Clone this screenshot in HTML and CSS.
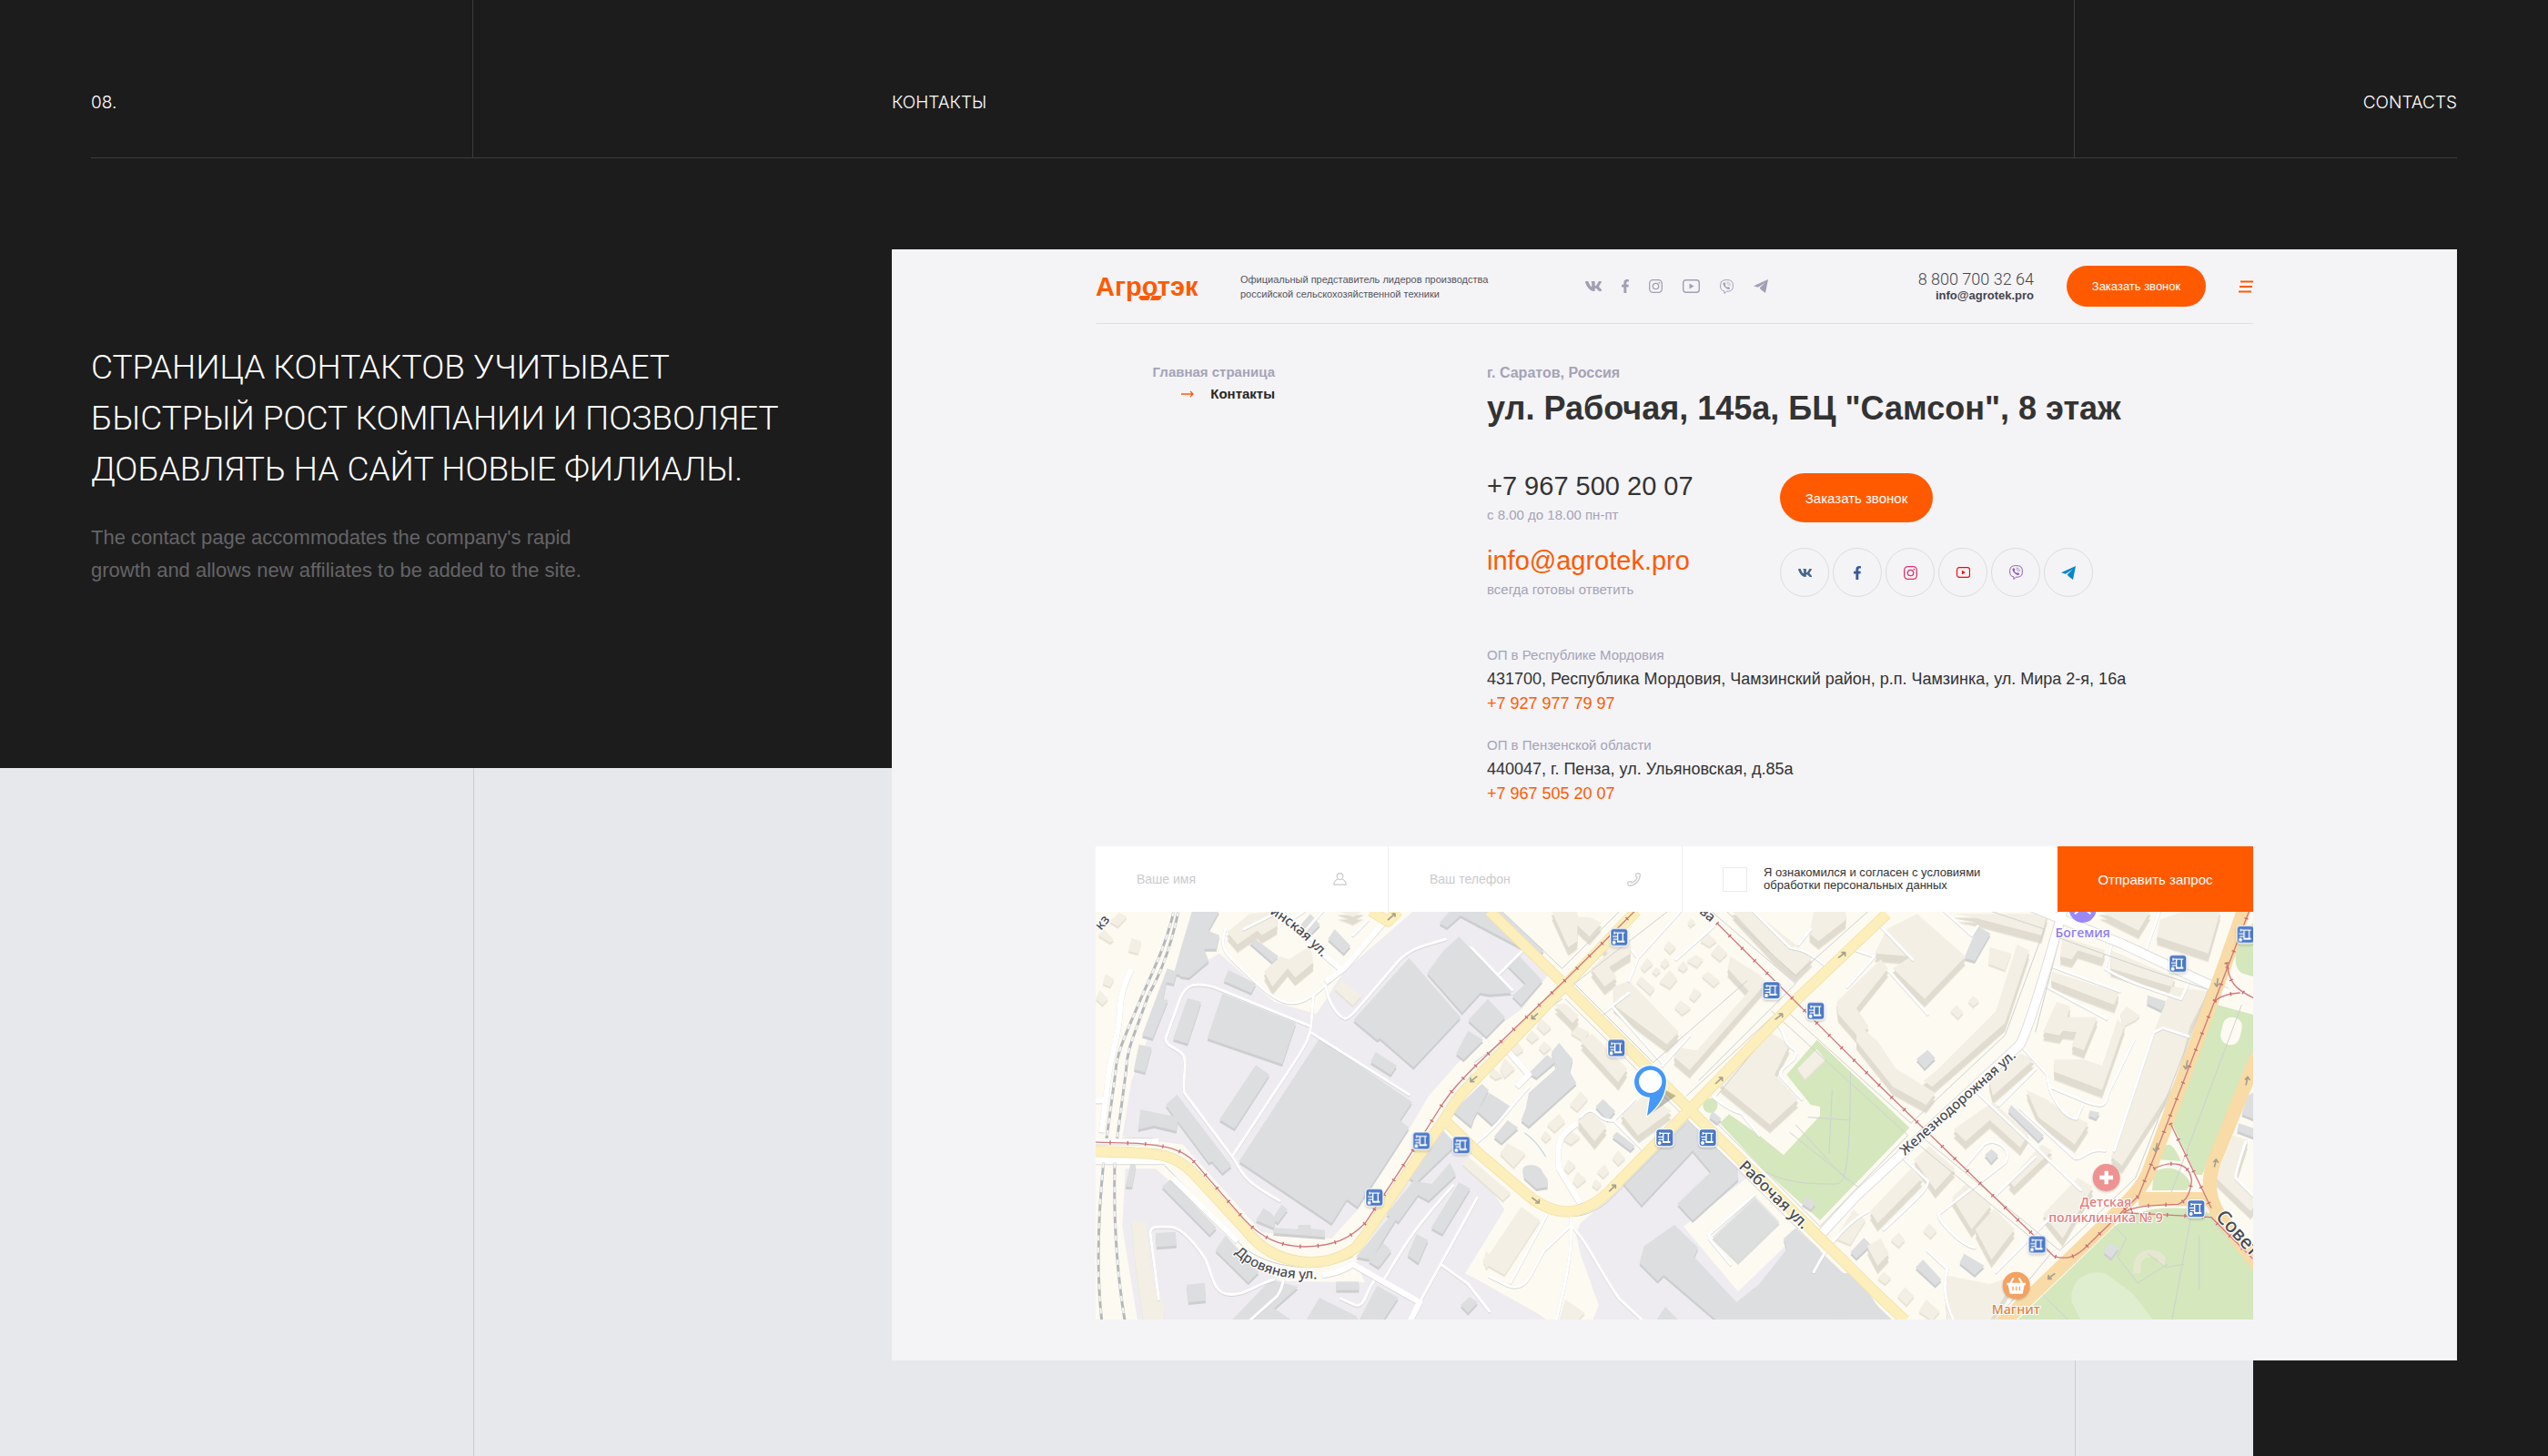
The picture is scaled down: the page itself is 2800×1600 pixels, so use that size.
FILE: index.html
```html
<!DOCTYPE html>
<html lang="ru">
<head>
<meta charset="utf-8">
<title>Агротэк — Контакты</title>
<meta name="viewport" content="width=device-width, initial-scale=1">
<link rel="stylesheet" href="styles.css">
</head>
<body>
<svg class="sprite" aria-hidden="true">
  <symbol id="i-vk" viewBox="18 96 530 320"><path fill="currentColor" d="M545 117.700c3.700-12.500 0-21.700-17.800-21.700h-58.900c-15 0-21.900 7.900-25.600 16.700 0 0-30 73.100-72.400 120.500-13.700 13.700-20 18.100-27.500 18.100-3.700 0-9.400-4.400-9.400-16.900V117.700c0-15-4.200-21.700-16.600-21.700h-92.600c-9.400 0-15 7-15 13.500 0 14.200 21.200 17.500 23.400 57.500v86.800c0 19-3.400 22.500-10.900 22.500-20 0-68.600-73.400-97.400-157.400-5.800-16.300-11.500-22.900-26.600-22.900H38.800c-16.800 0-20.200 7.900-20.200 16.700 0 15.600 20 93.100 93.100 195.500C160.400 378.100 229 416 291.400 416c37.500 0 42.100-8.400 42.100-22.900 0-66.800-3.400-73.100 15.400-73.100 8.700 0 23.700 4.400 58.700 38.100 40 40 46.600 57.900 69 57.900h58.900c16.800 0 25.300-8.400 20.400-25-11.200-34.900-86.900-106.700-90.300-111.500-8.700-11.200-6.200-16.200 0-26.200.1-.1 72-101.300 79.400-135.600z"/></symbol>
  <symbol id="i-fb" viewBox="22 0 276 512"><path fill="currentColor" d="M279.140 288l14.220-92.660h-88.910v-60.130c0-25.350 12.420-50.060 52.240-50.060h40.420V6.260S260.430 0 225.360 0c-73.220 0-121.080 44.380-121.080 124.720v70.620H22.890V288h81.390v224h100.170V288z"/></symbol>
  <symbol id="i-ig" viewBox="0 0 15 15"><g fill="none" stroke="currentColor" stroke-width="1.300"><rect x=".7" y=".7" width="13.600" height="13.600" rx="3.800"/><circle cx="7.500" cy="7.500" r="3.200"/></g><circle cx="11.400" cy="3.600" r=".9" fill="currentColor"/></symbol>
  <symbol id="i-yt" viewBox="0 0 19 15"><rect x=".7" y=".7" width="17.600" height="13.600" rx="3" fill="none" stroke="currentColor" stroke-width="1.400"/><path fill="currentColor" d="M7.500 4.500v6l5-3z"/></symbol>
  <symbol id="i-vb" viewBox="0 0 15 16"><path fill="none" stroke="currentColor" stroke-width="1" d="M7.500.6c5 0 6.900 1.700 6.900 6.400s-2 6.200-6.900 6.200l-2.600 2.300v-2.600C1.600 12.200.6 10.600.6 7 .6 2.300 2.500.6 7.500.6z"/><path fill="currentColor" d="M4.500 3.200c.8-.3 1.300.7 1.700 1.500.3.700-.6 1-.5 1.600.3 1.200 1.200 2.100 2.300 2.500.6.200.9-.8 1.500-.5.700.4 1.700.9 1.500 1.600-.5 1.200-1.500 1.300-2.500.8-2.300-1.100-4.100-2.900-4.900-5.200-.3-1 0-1.900.9-2.300z"/><path fill="none" stroke="currentColor" stroke-width=".7" d="M7.500 3c2.500.1 3.800 1.500 3.900 4M7.700 4.800c1.300.1 1.900.8 2 2"/></symbol>
  <symbol id="i-tg" viewBox="0 0 16 15"><path fill="currentColor" d="M0 7.300L16 0l-3 15-5-3.800-1.300-2L13 3.400 4.800 8.800z"/></symbol>
  <symbol id="stop" viewBox="-36 -36 72 72"><rect x="-31" y="-31" width="62" height="62" rx="14" fill="#fff" opacity=".95"/><rect x="-27" y="-27" width="54" height="54" rx="9" fill="#4b79c6"/><g fill="none" stroke="#fff" stroke-width="4"><path d="M-16-19v9M-16-15H18M-5-15V12M12-15V12M-22-3H-5M-20 6H-5"/><path d="M-7 14H18" stroke-width="6"/></g><circle cx="-17" cy="17" r="6" fill="#fff"/></symbol>
</svg>

<div class="slide">
  <div class="backdrop"></div>

  <header class="top">
    <span>08.</span>
    <span>КОНТАКТЫ</span>
    <span>CONTACTS</span>
  </header>

  <div class="stage">
    <section class="intro">
      <h1>СТРАНИЦА КОНТАКТОВ УЧИТЫВАЕТ<br>БЫСТРЫЙ РОСТ КОМПАНИИ И ПОЗВОЛЯЕТ<br>ДОБАВЛЯТЬ НА САЙТ НОВЫЕ ФИЛИАЛЫ.</h1>
      <p>The contact page accommodates the company's rapid<br>growth and allows new affiliates to be added to the site.</p>
    </section>

    <main class="site">
      <div class="bar">
        <a class="logo" href="#">Агротэк<svg viewBox="0 0 26 5" aria-hidden="true"><path fill="currentColor" d="M2 0h10l1 1-2 4H3L0 2zM15 0h11l-2 4-2 1h-9z"/></svg></a>
        <p class="tagline">Официальный представитель лидеров производства<br>российской сельскохозяйственной техники</p>
        <nav class="social" aria-label="Социальные сети">
          <a href="#" aria-label="ВКонтакте"><svg width="18" height="11"><use href="#i-vk"/></svg></a>
          <a href="#" aria-label="Facebook"><svg width="8" height="15"><use href="#i-fb"/></svg></a>
          <a href="#" aria-label="Instagram"><svg width="15" height="15"><use href="#i-ig"/></svg></a>
          <a href="#" aria-label="YouTube"><svg width="19" height="15"><use href="#i-yt"/></svg></a>
          <a href="#" aria-label="Viber"><svg width="15" height="16"><use href="#i-vb"/></svg></a>
          <a href="#" aria-label="Telegram"><svg width="16" height="15"><use href="#i-tg"/></svg></a>
        </nav>
        <div class="reach">
          <a class="reach-phone" href="tel:88007003264">8 800 700 32 64</a>
          <a class="reach-mail" href="mailto:info@agrotek.pro">info@agrotek.pro</a>
        </div>
        <button class="pill pill-small" type="button">Заказать звонок</button>
        <button class="burger" type="button" aria-label="Меню"><svg width="16" height="14" viewBox="0 0 16 14"><g stroke="currentColor" stroke-width="2"><path d="M2 1.500h14M1 7h14M0 12.500h14"/></g></svg></button>
      </div>

      <div class="content">
        <nav class="crumbs" aria-label="Навигация">
          <a href="#">Главная страница</a>
          <span class="current"><svg width="14" height="8" viewBox="0 0 14 8"><path fill="none" stroke="currentColor" stroke-width="1.300" d="M0 4h13M10 1l3 3-3 3"/></svg>Контакты</span>
        </nav>
        <div class="info">
          <p class="city">г. Саратов, Россия</p>
          <h2>ул. Рабочая, 145а, БЦ "Самсон", 8 этаж</h2>
          <div class="contacts">
            <div><a class="big" href="tel:+79675002007">+7 967 500 20 07</a><p class="note">с 8.00 до 18.00 пн-пт</p></div>
            <button class="pill" type="button">Заказать звонок</button>
            <div><a class="big accent" href="mailto:info@agrotek.pro">info@agrotek.pro</a><p class="note">всегда готовы ответить</p></div>
            <nav class="rounds" aria-label="Мы в соцсетях">
              <a class="vk" href="#" aria-label="ВКонтакте"><svg width="15" height="9"><use href="#i-vk"/></svg></a>
              <a class="fb" href="#" aria-label="Facebook"><svg width="8" height="15"><use href="#i-fb"/></svg></a>
              <a class="ig" href="#" aria-label="Instagram"><svg width="15" height="15"><use href="#i-ig"/></svg></a>
              <a class="yt" href="#" aria-label="YouTube"><svg width="15" height="12"><use href="#i-yt"/></svg></a>
              <a class="vb" href="#" aria-label="Viber"><svg width="15" height="16"><use href="#i-vb"/></svg></a>
              <a class="tg" href="#" aria-label="Telegram"><svg width="16" height="15"><use href="#i-tg"/></svg></a>
            </nav>
          </div>
          <div class="branches">
            <div class="branch"><p class="note">ОП в Республике Мордовия</p><p class="address">431700, Республика Мордовия, Чамзинский район, р.п. Чамзинка, ул. Мира 2-я, 16а</p><a class="tel" href="tel:+79279777997">+7 927 977 79 97</a></div>
            <div class="branch"><p class="note">ОП в Пензенской области</p><p class="address">440047, г. Пенза, ул. Ульяновская, д.85а</p><a class="tel" href="tel:+79675052007">+7 967 505 20 07</a></div>
          </div>
        </div>
      </div>

      <form class="request">
        <label class="field"><input type="text" placeholder="Ваше имя" aria-label="Ваше имя"><svg width="15" height="14" viewBox="0 0 15 14"><path fill="none" stroke="currentColor" stroke-width="1.200" d="M7.500.6c2 0 3.300 1.300 3.300 3.200S9.500 7.600 7.500 7.600 4.200 5.700 4.200 3.800 5.500.6 7.500.6zM5 7.300C2 8.300.8 10 .8 13.200h13.400C14.200 10 13 8.300 10 7.300"/></svg></label>
        <label class="field"><input type="tel" placeholder="Ваш телефон" aria-label="Ваш телефон"><svg width="15" height="15" viewBox="0 0 15 15"><path fill="none" stroke="currentColor" stroke-width="1.200" d="M11 .7c2 0 3.300.6 3.300 1.800C14 9 9 14 2.500 14.300 1.300 14.300.7 13 .7 11c0-.7.400-.9 1-1l2.500-.3c.6 0 .8.500.9 1.500 3-.9 5-2.900 6.100-6.100-1-.2-1.500-.4-1.500-.9L10 1.700c.1-.7.400-1 1-1z"/></svg></label>
        <label class="agree"><input type="checkbox"><span>Я ознакомился и согласен с условиями<br>обработки персональных данных</span></label>
        <button class="send" type="submit">Отправить запрос</button>
      </form>

      <svg class="map" viewBox="12 3 3816 1344" role="img" aria-label="Карта">
        <rect class="land" x="0" y="0" width="3840" height="1350"/>

        <!-- industrial zones -->
        <g class="zone">
          <path d="M300 210L420 140L600 300L740 340L830 200L1060 0H1260L1520 190L1420 320L1260 440L1110 610L1010 780L880 980L790 1080L560 1060L300 770L100 745L130 560L180 430L250 200Z"/>
          <path d="M110 850H210L290 920L480 1110L620 1220L900 1225L870 1160L1110 760L1220 780L1360 985L1250 1180L1500 1350H150L100 1040Z"/>
          <path d="M1250 1180L1420 1290L1500 1350H1650L1670 1300L1590 1080L1610 1030L1760 900L1960 690L2160 880L1950 1040L2130 1255L2290 1100L2330 1060L2620 1350H1200Z"/>
        </g>
        <path class="land" d="M1260 1210L1510 1350H1650L1670 1300L1610 1130L1590 1040L1450 1010L1360 985L1230 1195Z"/>

        <!-- parks -->
        <g class="park">
          <path d="M2390 425L2695 715L2400 1020L2210 850L2070 700L2100 670L2200 740L2280 805L2400 675V645L2370 640L2290 540Z"/>
          <path d="M3710 310L3840 345V440L3660 870H3640L3560 700Z"/>
          <path d="M3780 110L3840 20V220L3790 205C3765 190 3765 140 3780 110Z"/>
          <path d="M3500 860C3550 835 3600 850 3622 900L3610 920L3495 922Z"/>
          <path d="M3535 780C3550 760 3565 770 3590 825L3520 820Z"/>
          <path d="M3050 1350L3360 1050C3430 985 3520 970 3640 985L3700 1000L3840 1170V1350Z"/>
          <circle cx="2038" cy="642" r="24"/>
        </g>
        <path class="meadow" d="M3230 1290C3220 1220 3280 1180 3340 1195L3430 1260L3500 1350H3260Z"/>
        <rect class="land" x="3724" y="350" width="64" height="92" rx="30" transform="rotate(14 3756 396)"/>
        <path class="ring" d="M3445 1195C3440 1140 3470 1125 3500 1130S3530 1150 3524 1165"/>

        <!-- grey buildings -->
        <g class="grey">
          <path d="M330 0H420L300 215L270 205L300 100Z"/>
          <path d="M370 60L420 80L410 125H370L385 165L320 220L290 215Z"/>
          <path d="M248 190L280 200L270 240L245 235L235 290L250 295L200 420L165 410Z"/>
          <path d="M155 440L197 450L175 532L138 522Z"/><path d="M315 287L360 300L315 437L267 422Z"/>
          <path d="M430 272L672 370L627 505L380 420Z"/><path d="M450 195L540 240L525 270L434 230Z"/>
          <path d="M540 508L585 540L470 718L420 688Z"/><path d="M280 605L460 840L430 865L395 825L385 830L243 640Z"/>
          <path d="M160 655L285 680L278 725L205 708L152 720Z"/><path d="M750 420L1055 630L1015 690L1045 715L875 975L840 950L790 1030L485 825Z"/>
          <path d="M1045 155L1215 350L1060 515L950 420L940 425L862 360Z"/><path d="M1210 85L1385 270L1310 275L1280 270L1220 335L1105 205L1160 130Z"/>
          <path d="M1180 0H1350L1490 130L1470 150L1215 15L1170 55L1145 40Z"/><path d="M1410 150L1485 230L1415 310L1385 280L1430 240L1370 180Z"/>
          <path d="M1305 290L1362 350L1300 415L1240 360Z"/><path d="M1240 395L1290 425L1225 490L1200 470Z"/>
          <path d="M935 465L1005 510L985 540L918 498Z"/><path d="M720 10L752 45L722 75L688 45Z"/><path d="M800 60L852 115L830 140L778 92Z"/>
          <path d="M535 90L615 150L595 170L520 105Z"/>
          <path d="M260 885L410 1045L388 1068L230 908Z"/><path d="M440 1070L550 1190L515 1225L407 1118Z"/><path d="M210 1062L275 1058L279 1103L213 1108Z"/><path d="M312 1232L372 1226L375 1285L318 1290Z"/>
          <path d="M128 830L145 840L132 910L110 908Z"/><path d="M565 980L590 995L605 1015L600 1045L540 1020Z"/><path d="M600 1045L680 1050V1035H720L722 1048L768 1052V1075L598 1062Z"/>
          <path d="M625 968L645 985L612 1028L595 1015Z"/><path d="M1155 720L1200 770L1070 895L1045 880Z"/><path d="M1180 830L1200 870L1110 955L1075 935L1010 1025L970 1000L1060 890L1120 900Z"/>
          <path d="M1210 895L1247 915L1155 1065L1118 1045Z"/><path d="M985 1005L1000 1020L920 1150L870 1140Z"/><path d="M1070 1065L1108 1085L1075 1160L1040 1135Z"/>
          <path d="M960 1095L987 1120L945 1175L912 1155Z"/><path d="M805 1222H880V1250H805Z"/><path d="M750 1275L870 1335L880 1350H705Z"/><path d="M940 1235L1010 1275L960 1350H880Z"/>
          <path d="M590 1215L680 1240L600 1310L660 1350H460Z"/><path d="M1245 1272L1272 1290L1240 1325L1215 1300Z"/>
          <path d="M1285 570L1308 590L1260 680L1250 710L1190 660Z"/><path d="M1310 600L1380 645L1320 705L1270 660Z"/>
          <path d="M1540 435L1585 490L1575 530L1597 568L1440 710L1415 690L1430 650L1440 600L1530 520L1515 465Z"/><path d="M1500 475L1530 495L1465 550L1440 535Z"/>
          <path d="M1370 690L1405 715L1350 765L1325 745Z"/><path d="M1685 620L1725 660L1700 690L1660 645Z"/><path d="M1730 728L1790 775L1775 790L1715 745Z"/>
          <path d="M1420 850C1430 830 1480 835 1485 860L1502 885V910L1465 915L1425 880Z"/><path d="M1955 680L2130 850V885L1980 1020L1930 965L2040 860L1980 790L1812 970L1745 890Z"/>
          <path d="M1920 1035L1998 1110L1985 1140L2125 1290L2200 1230L2290 1115L2280 1080L2320 1045L2640 1350H2060L1885 1200L1865 1220L1805 1160L1820 1105Z"/>
          <path d="M1890 1305L1935 1350H1860Z"/><path d="M2185 940L2267 1025L2130 1158L2045 1075Z" opacity=".7"/>
          <path d="M2545 1078L2568 1100L2520 1145L2500 1125Z"/><path d="M2380 440L2400 450" /><path d="M2045 660L2075 685L2060 700L2035 680Z"/><path d="M2358 940L2385 965L2370 985L2340 965Z"/>
          <path d="M2920 50L2962 75L2910 165L2875 155Z"/><path d="M2755 458L2780 485L2745 520L2718 488Z"/><path d="M3480 278L3540 298L3525 328L3478 305Z"/>
          <path d="M3030 640L3138 740L3120 758L3020 660Z"/><path d="M2965 785L2988 805L2965 830L2943 805Z"/><path d="M3290 658L3322 665L3310 685L3285 675Z"/>
          <path d="M2875 1130L2942 1170L2910 1200L2860 1160Z"/><path d="M2740 1150L2800 1215L2780 1235L2715 1175Z"/><path d="M2380 1190L2520 1195L2620 1350H2500L2380 1260Z"/>
          <path d="M3810 610L3840 590V690L3790 670Z"/><path d="M3780 700L3840 720V750L3775 725Z"/><path d="M3355 1095L3385 1110L3360 1145L3335 1125Z"/>
        </g>

        <!-- low beige houses -->
        <g class="beige low">
          <path d="M90 5L115 20L85 52L58 35Z"/><path d="M40 60L72 95L60 105L20 80Z"/><path d="M130 90L162 100L152 140L120 132Z"/><path d="M45 208L73 225L60 250L35 240Z"/><path d="M25 260L53 290L35 310L12 290Z"/>
          <path d="M130 1022L178 1025L195 1180L240 1310L235 1350H170L145 1180Z"/><path d="M825 228L888 280L860 312L800 258Z"/><path d="M1240 810L1380 930L1355 955L1220 835Z"/><path d="M1300 1120L1320 1150L1300 1180L1290 1150Z"/>
          <path d="M1480 355L1515 385L1490 405L1465 380Z"/><path d="M1450 395L1475 415L1450 435L1430 415Z"/><path d="M1490 430L1515 450L1490 470L1472 452Z"/><path d="M1400 430L1423 460L1400 475L1380 455Z"/><path d="M1360 485L1395 520L1360 550L1345 520Z"/><path d="M1320 515L1355 545L1330 555L1310 540Z"/>
          <path d="M1610 595L1635 620L1600 660L1575 640Z"/><path d="M1540 670L1560 695L1525 728L1500 705Z"/><path d="M1495 725L1515 745L1495 762L1480 745Z"/><path d="M1370 765L1430 800L1390 845L1345 800Z"/><path d="M1570 720L1610 745L1580 770L1555 755Z"/><path d="M1570 820L1595 840L1570 865L1555 850Z"/><path d="M1600 860L1630 885L1600 910L1585 890Z"/><path d="M1690 835L1705 860L1685 880L1665 860Z"/><path d="M1660 885L1680 900L1665 918L1648 905Z"/><path d="M1735 790L1758 815L1735 838L1715 815Z"/><path d="M1580 370L1640 400L1620 430L1580 405Z"/>
          <path d="M1415 975L1477 1020L1360 1200L1290 1160Z"/><path d="M1560 1280L1625 1325L1600 1350H1540Z"/><path d="M2510 985L2550 1020L2500 1100L2450 1080Z"/>
          <path d="M1830 155L1850 175L1820 200L1808 185Z"/><path d="M1860 185L1875 198L1860 212L1845 200Z"/><path d="M1890 155L1905 172L1888 188L1872 175Z"/><path d="M1905 195L1930 225L1905 255L1870 235Z"/><path d="M1950 165L1965 185L1950 200L1930 188Z"/><path d="M1990 145L2015 160L1995 185L1960 165Z"/><path d="M2030 75L2060 100L2035 118L2005 100Z"/><path d="M1900 100L1925 120L1905 140L1885 120Z"/><path d="M1810 215L1855 255L1840 275L1795 235Z"/><path d="M2030 200L2070 230L2050 250L2010 215Z"/><path d="M1985 255L2010 270L1985 298L1968 285Z"/><path d="M1940 295L1975 320L1945 342L1920 318Z"/><path d="M2065 110L2095 140L2070 165L2040 140Z"/><path d="M1975 25L1990 38L1973 52L1963 40Z"/>
          <path d="M2390 455L2418 490L2350 555L2325 520Z"/><path d="M2905 280L2925 298L2905 315L2888 298Z"/><path d="M2850 310L2872 335L2855 355L2830 330Z"/>
          <path d="M2760 1030L2785 1055L2765 1078L2740 1055Z"/><path d="M2660 1060L2680 1085L2660 1108L2633 1085Z"/><path d="M2610 1190L2635 1210L2615 1230L2590 1212Z"/><path d="M2680 1240L2710 1270L2685 1300L2655 1270Z"/><path d="M2750 1282L2795 1320L2770 1350L2725 1320Z"/>
          <path d="M3410 315L3455 345L3440 360L3400 380L3390 340Z"/><path d="M2960 120L3030 140L3010 195L2955 175Z"/>
        </g>

        <!-- tall beige blocks -->
        <g class="beige tall">
          <path d="M445 70L520 10L610 0V50L560 80L545 65L480 110Z"/><path d="M567 200L620 150L650 160L720 115L730 170L670 220L645 190L595 250Z"/>
          <path d="M810 0H895L860 20Z"/><path d="M1515 0H1600V100L1570 120Z"/><path d="M1570 20H1640L1680 40L1640 85Z"/><path d="M1645 190L1700 140L1670 100L1775 100V140L1705 185L1730 220L1690 250Z"/>
          <path d="M1720 250L1770 230L1935 400L1895 440L1720 310Z"/><path d="M2105 150L2200 210L2225 235L1970 525L1918 480L1930 450L1995 460L2165 265L2095 190Z"/>
          <path d="M2110 0H2180L2375 155L2320 210L2250 150Z"/><path d="M2380 0H2485V30L2395 100L2365 75Z"/><path d="M1525 310L1560 305L1605 345L1585 370Z"/><path d="M1611 430L1650 405L1765 520L1735 565Z"/>
          <path d="M2455 300L2600 160L2625 190L2520 320L2560 380L2530 420L2460 340Z"/><path d="M1600 690L1640 660L1697 710L1657 760Z"/><path d="M1744 670L1830 600L1910 660L1800 740Z"/>
          <path d="M2070 570L2220 390L2300 440L2250 540L2328 620L2235 705Z"/><path d="M2620 60L2720 10L2880 150L2745 290L2640 190L2700 150L2580 140Z"/>
          <path d="M2840 10H3150L3130 80L2900 20Z"/><path d="M3050 110L3090 130L3010 370L2770 580L2740 560L2780 530L2980 330Z"/><path d="M2520 370L2590 430L2650 520L2780 600L2750 640L2640 580L2520 430Z"/>
          <path d="M3200 85L3340 130L3330 155L3250 130L3230 160L3192 150Z"/><path d="M3360 130L3570 220L3560 250L3358 190Z"/><path d="M3165 200L3385 270L3370 310L3162 230Z"/><path d="M3180 300L3225 315L3215 350L3315 350L3270 460L3230 445L3245 400L3200 395L3190 410L3135 400Z"/>
          <path d="M3380 360L3405 375L3330 590L3172 530V490L3270 490L3330 510Z"/><path d="M3560 250L3680 265L3620 380L3575 560L3395 840L3360 810L3500 400Z"/><path d="M3520 30L3600 0H3720L3680 140L3510 85Z"/><path d="M3320 0H3490L3450 65Z"/>
          <path d="M2957 560L3060 470L3106 490L2970 610Z"/><path d="M3080 590L3145 620L3200 660L3285 700L3240 770L3120 680Z"/><path d="M2840 720L2970 630L3088 735L3060 780L2960 690L2880 760Z"/>
          <path d="M2565 990L2700 850L2738 880L2590 1030Z"/><path d="M2710 820L2760 775L2845 850L2780 920Z"/><path d="M3022 890L3130 770L3165 790L3040 910Z"/><path d="M2835 945L2880 900L2965 970L2900 1050Z"/><path d="M2912 1050L2975 980L3042 1050L2965 1150Z"/><path d="M3135 1000L3250 880L3300 910L3200 1080Z"/>
          <path d="M2555 1105L2600 1080L2627 1130L2590 1170Z"/><path d="M2810 1200L2960 1230L3050 1200L2960 1350H2820Z"/><path d="M3705 880L3760 740L3810 755L3770 880L3840 960L3820 990Z"/>
        </g>

        <!-- lanes, pavements -->
        <g class="lane">
          <path d="M440 60C420 130 430 130 540 235C640 330 680 310 740 270L830 190"/><path d="M770 235C770 290 810 350 835 355C850 355 860 340 1010 165C1060 115 1100 115 1165 93"/>
          <path d="M730 280L722 380C715 430 700 450 600 600L465 805"/><path d="M720 380L400 250C340 235 310 240 290 290L243 420C240 450 290 450 303 480C315 520 295 560 305 600L470 820C500 880 520 900 618 955"/>
          <path d="M720 400L1045 605"/><path d="M220 1280L192 1060C195 1040 210 1040 260 1042C300 1045 350 1110 375 1150C400 1210 400 1250 440 1262C500 1275 540 1230 600 1215"/><path d="M520 1350L610 1270C640 1230 625 1200 640 1180"/>
          <path d="M820 1278L870 1300C900 1305 900 1260 930 1220"/><path d="M960 1220C1030 1100 1060 1050 1190 905"/><path d="M1080 1290L1270 945"/><path d="M1150 1165L1240 1230L1310 1320"/><path d="M1250 120L1385 260"/><path d="M1340 210L1420 130"/>
          <path d="M1260 770C1350 700 1380 640 1440 580"/><path d="M1310 1205L1370 1235C1440 1260 1450 1180 1490 1120L1575 1040"/><path d="M1380 1225L1500 1000"/><path d="M1578 1010C1585 1100 1570 1200 1530 1350"/><path d="M1580 1040C1630 1080 1680 1200 1740 1280L1815 1350"/>
          <path d="M1610 680C1660 620 1660 700 1720 690L1815 785M1720 690L1790 620"/><path d="M2185 935L2035 1065V1080L2105 1165"/><path d="M2045 610C2080 640 2110 660 2140 665L2200 740"/><path d="M2260 375C2290 400 2270 430 2320 460C2330 500 2260 510 2270 545L2340 620"/>
          <path d="M1770 230L1800 155L1940 0M1800 155L1780 130"/><path d="M1925 160L2050 50"/><path d="M1720 320L1880 500M1680 340L1770 270M1880 510L1970 410"/><path d="M2180 0L2300 120C2320 130 2330 110 2420 180M2370 60L2330 110"/>
          <path d="M2600 50L2705 160M2520 130L2580 150L2490 250M2630 200L2755 340"/><path d="M2810 0L2900 80L2920 50"/><path d="M3160 180L3390 265M3130 240L3345 355"/><path d="M3360 115L3340 190C3400 230 3500 260 3590 290L3620 225M3470 140L3520 0"/>
          <path d="M3060 440L3150 540C3150 600 3200 680 3245 685L3265 640M3160 580L3280 630C3340 650 3340 640 3350 600L3435 425"/><path d="M3370 790L3500 400L3530 385L3620 415"/><path d="M2920 600L3260 920M2990 640L3110 520M3060 650L3240 815C3270 820 3280 780 3340 790M2880 840L2940 770C2980 740 3040 790 3010 830L2790 1000C2790 1020 2860 1100 2910 1110"/>
          <path d="M2670 810L2755 890C2760 910 2740 930 2610 1050M2975 940L3110 810M2980 1190L3160 1010"/><path d="M2755 1120L2820 1180C2800 1250 2820 1300 2840 1350"/><path d="M3804 760C3780 830 3770 860 3770 880L3840 950"/><path d="M2380 1190C2430 1090 2500 1020 2560 990"/>
          <path d="M620 0L500 60M640 40L700 0M700 70L760 0M860 80L910 30M640 0L790 170"/>
        </g>
        <g class="thin">
          <path d="M1350 0L1550 190L1740 0M1590 240L1850 500L2160 230M1560 290L2400 1120M1590 240L1900 0M2000 560L2320 240L2040 0M1960 610L2350 250M1260 500L1550 290M1960 700L1700 960C1620 1020 1560 1020 1480 970L1260 770"/>
          <path d="M2090 0L2320 215L2560 0M2290 330L2700 700L3010 410L3140 60L2960 0M2240 330L2690 740L2400 1040L2050 690M2290 330L2060 610M3110 400L3190 90L3470 190L3680 260M2730 740L3190 1120L3440 880L3680 260M2700 750L3160 1130L2980 1350"/>
          <path d="M2220 860C2300 900 2370 900 2450 900C2480 900 2500 870 2500 530M2300 730L2550 930M2430 800L2440 590M2360 680L2500 690M2320 705L2490 890"/>
          <path d="M3790 310L3550 950M3410 1080L3380 1140L3450 1230M3480 1130L3540 1175L3600 1165M3625 1000L3560 1350M3650 1070V1250M3840 1180L3700 1030M3360 1030L3410 1080M3450 1225L3545 1165M3120 1250L3220 1350"/>
          <path d="M1250 540L1010 900M200 750H100M240 840L500 1110C620 1200 780 1180 860 1140"/>
        </g>
        <path class="water" d="M1426 732C1470 760 1480 790 1496 810"/>
        <g class="street">
          <path d="M130 190C110 240 95 260 92 330C90 420 55 480 48 600L32 730M12 625H48"/><path d="M960 40L830 190L770 235M760 140L825 195M12 760H220M12 825H240" />
          <path d="M265 880L480 1090M760 1200C800 1195 830 1185 860 1165L1080 1290L1050 1350"/><path d="M1610 965L1540 850C1530 760 1540 740 1600 700M1370 460L1440 540L1400 580"/>
        </g>
        <g class="street wide"><path d="M2400 1070L2520 940L3060 440C3090 380 3150 180 3200 0"/><path d="M3080 -20L3400 110L3740 270"/></g>
        <g class="street-fill"><path d="M2400 1070L2520 940L3060 440C3090 380 3150 180 3200 0"/><path d="M3080 -20L3400 110L3740 270"/></g>

        <g class="rail"><path d="M270 0C245 110 200 200 165 280C110 410 80 470 78 530L48 750M38 830C25 960 10 1150 32 1350"/><path d="M285 0C260 120 225 210 185 280C140 410 115 450 112 530L83 750M75 830C72 960 75 1150 108 1350"/></g>
        <g class="rail-gap"><path d="M270 0C245 110 200 200 165 280C110 410 80 470 78 530L48 750M38 830C25 960 10 1150 32 1350"/><path d="M285 0C260 120 225 210 185 280C140 410 115 450 112 530L83 750M75 830C72 960 75 1150 108 1350"/></g>

        <g class="road-edge">
          <path d="M0 792L120 796C230 800 270 805 330 860L510 1055C600 1170 760 1190 870 1110C900 1080 1010 900 1160 690C1190 640 1200 620 1260 560L1560 245L1795 0"/>
          <path d="M1310 0L1560 245L1970 655L2580 1255L2680 1350"/><path d="M1162 690L1270 795L1440 940C1530 1010 1610 1010 1700 930L1970 655L2320 295L2620 10"/><path d="M920 0L975 35L1010 0"/>
        </g>
        <g class="road">
          <path d="M0 792L120 796C230 800 270 805 330 860L510 1055C600 1170 760 1190 870 1110C900 1080 1010 900 1160 690C1190 640 1200 620 1260 560L1560 245L1795 0"/>
          <path d="M1310 0L1560 245L1970 655L2580 1255L2680 1350"/><path d="M1162 690L1270 795L1440 940C1530 1010 1610 1010 1700 930L1970 655L2320 295L2620 10"/><path d="M920 0L975 35L1010 0"/>
        </g>
        <g class="avenue">
          <path d="M3800 -10L3730 190L3565 640L3480 870C3450 930 3430 950 3000 1360"/><path d="M3450 950H3690"/><path d="M3840 480L3710 800C3670 890 3680 950 3720 1010L3860 1190"/>
        </g>

        <g class="tram">
          <path id="t1" d="M0 762L150 766C250 775 290 785 330 820L500 1015C560 1080 620 1105 700 1107C800 1105 850 1080 900 1030C960 940 1040 820 1150 645C1180 600 1200 575 1260 515L1550 238L1790 0"/>
          <path id="t2" d="M2060 40L2580 560L3100 1065L3170 1138C3210 1150 3240 1145 3280 1105L3450 940L3510 790L3700 300L3815 0"/>
          <path id="t3" d="M3740 170C3750 240 3770 260 3840 292M3700 298C3720 280 3750 272 3785 270M3555 700L3690 980M3500 850C3560 820 3620 830 3625 890C3620 940 3600 960 3580 967C3500 970 3440 970 3400 995L3690 1010L3840 1160"/>
        </g>
        <g class="ticks"><use href="#t1"/><use href="#t2"/><use href="#t3"/></g>
        <g class="arrows"><path d="M975 30L998 10M988 9H999V20"/><path d="M1270 545L1248 562M1248 550V563H1261"/><path d="M1470 338L1450 355M1450 343V356H1463"/><path d="M2460 155L2482 138M2470 137H2483V150"/><path d="M2252 358L2275 340M2263 339H2276V352"/><path d="M2055 570L2077 550M2066 549H2078V562"/><path d="M1705 925L1725 905M1713 904H1726V916"/><path d="M1450 945L1473 962M1474 950V963H1461"/><path d="M3712 222L3708 248M3700 238L3708 249L3716 240"/><path d="M3612 492L3606 520M3598 510L3606 521L3615 512"/><path d="M3512 765L3506 792M3498 782L3506 793L3515 784"/><path d="M3175 1195L3152 1212M3154 1200L3152 1213L3165 1213"/><path d="M3700 845L3706 820M3697 828L3706 819L3713 830"/><path d="M3804 575L3810 548M3801 557L3810 547L3817 558"/></g>

        <!-- street names -->
        <g class="names">
          <path id="n1" d="M585 8Q690 70 790 190"/><path id="n2" d="M470 1128Q580 1235 800 1208"/><path id="n3" d="M2130 845L2430 1135"/><path id="n4" d="M2680 808L3110 425"/><path id="n5" d="M3702 1010L3900 1225"/><path id="n6" d="M2000 5L2075 70"/><path id="n7" d="M30 66L110 -30"/>
          <text class="name"><textPath href="#n1">инская ул.</textPath></text><text class="name"><textPath href="#n2">Дровяная ул.</textPath></text><text class="name mid"><textPath href="#n3">Рабочая ул.</textPath></text><text class="name"><textPath href="#n4">Железнодорожная ул.</textPath></text><text class="name large"><textPath href="#n5">Советская</textPath></text><text class="name"><textPath href="#n6">ва</textPath></text><text class="name"><textPath href="#n7">кз</textPath></text>
        </g>

        <!-- places -->
        <circle cx="3266" cy="-6" r="45" fill="#9c88f5"/><path d="M3240 10L3256 -4H3276L3292 10" fill="none" stroke="#fff" stroke-width="6"/>
        <text class="place violet" x="3266" y="88">Богемия</text>
        <g class="spot"><circle cx="3344" cy="879" r="45" fill="#ee9392"/><path d="M3344 857V901M3322 879H3366" stroke="#fff" stroke-width="13"/></g>
        <text class="place rose" x="3342" y="975">Детская</text><text class="place rose" x="3342" y="1027">поликлиника № 9</text>
        <g class="spot"><circle cx="3047" cy="1235" r="45" fill="#f5a15f"/><path fill="#fff" d="M3016 1226H3078V1234H3074L3068 1262H3026L3020 1234H3016Z"/><path fill="none" stroke="#fff" stroke-width="6" d="M3028 1228L3038 1210M3066 1228L3056 1210"/><path stroke="#f5a15f" stroke-width="4" d="M3036 1238V1252M3047 1238V1252M3058 1238V1252"/></g>
        <text class="place amber" x="3046" y="1328">Магнит</text>

        <g class="stops">
          <use href="#stop" x="1050" y="722" width="72" height="72"/><use href="#stop" x="1182" y="736" width="72" height="72"/><use href="#stop" x="895" y="909" width="72" height="72"/>
          <use href="#stop" x="1702" y="51" width="72" height="72"/><use href="#stop" x="1693" y="416" width="72" height="72"/><use href="#stop" x="1852" y="712" width="72" height="72"/><use href="#stop" x="1994" y="712" width="72" height="72"/><use href="#stop" x="2204" y="226" width="72" height="72"/><use href="#stop" x="2350" y="294" width="72" height="72"/>
          <use href="#stop" x="3544" y="138" width="72" height="72"/><use href="#stop" x="3767" y="42" width="72" height="72"/><use href="#stop" x="3604" y="946" width="72" height="72"/><use href="#stop" x="3080" y="1064" width="72" height="72"/>
        </g>

        <!-- office pin -->
        <path d="M1835 674L1925 610L1890 590Z" fill="#333" opacity=".3"/>
        <path d="M1841 511A52 52 0 0 1 1892 572C1888 610 1868 645 1830 676L1839 615A52 52 0 0 1 1841 511Z" fill="#4598f7" stroke="#fff" stroke-width="8" stroke-linejoin="round" paint-order="stroke"/>
        <circle cx="1841" cy="562" r="38" fill="#fff"/>
      </svg>
    </main>
  </div>
</div>
</body>
</html>
```

FILE: styles.css
```css
* { box-sizing: border-box; }

body {
  margin: 0;
  background: #1c1c1c;
  color: #333;
  font-family: "Liberation Sans", Arial, sans-serif;
}

h1, h2, p { margin: 0; font-weight: 400; }
a { color: inherit; text-decoration: none; }
button, input { font: inherit; border: 0; padding: 0; margin: 0; background: none; }
button { cursor: pointer; }
svg { display: block; }
.sprite { position: absolute; width: 0; height: 0; }

.slide { position: relative; min-height: 100vh; overflow: hidden; }

.backdrop {
  position: absolute;
  top: 844px;
  right: 324px;
  bottom: 0;
  left: 0;
  background: #e7e8ec;
}
.backdrop::before, .backdrop::after {
  content: "";
  position: absolute;
  top: 0;
  bottom: 0;
  width: 1px;
  background: #cbccd0;
}
.backdrop::before { left: 520px; }
.backdrop::after { right: 195px; }

.top {
  position: relative;
  display: grid;
  grid-template-columns: 880px 1fr auto;
  align-items: center;
  margin: 0 100px;
  padding: 101px 0 48px;
  border-bottom: 1px solid #3c3c3c;
  color: #fff;
  font: 300 19px/24px Inter, sans-serif;
}
.top::before, .top::after {
  content: "";
  position: absolute;
  top: 0;
  bottom: 0;
  width: 1px;
  background: #3c3c3c;
}
.top::before { left: 419px; }
.top::after { right: 420px; }

.stage {
  position: relative;
  display: grid;
  grid-template-columns: 880px minmax(0, 1fr);
  align-items: start;
  padding: 100px 100px 106px;
}

.intro { padding-top: 102px; color: #fff; }
.intro h1 { font: 300 37px/56px Roboto, sans-serif; }
.intro p { margin-top: 29px; color: #646467; font-size: 22px; line-height: 36px; }

.site { padding: 0 224px 45px; background: #f4f4f7; }

.bar {
  display: flex;
  align-items: center;
  height: 82px;
  border-bottom: 1px solid #e0e0e3;
}
.logo {
  position: relative;
  flex: 0 0 159px;
  color: #ff5a00;
  font-size: 29px;
  font-weight: 700;
  line-height: 36px;
}
.logo svg { position: absolute; left: 47px; bottom: 3px; width: 26px; height: 5px; }
.tagline { flex: 0 0 379px; color: #55545c; font-size: 11px; line-height: 16px; }
.social { display: flex; align-items: center; gap: 22px; color: #a19fb3; }
.reach { display: flex; flex-direction: column; align-items: flex-end; margin-left: auto; color: #45444c; }
.reach-phone { font: 300 18px/20px Roboto, sans-serif; }
.reach-mail { font-size: 13px; font-weight: 700; line-height: 16px; }

.pill {
  width: 168px;
  height: 54px;
  border-radius: 27px;
  background: #ff5a00;
  color: #fff;
  font-size: 15px;
}
.pill-small { width: 153px; height: 45px; margin: 0 36px; font-size: 13px; }
.burger { color: #ff5a00; }

.content { display: grid; grid-template-columns: 430px minmax(0, 1fr); padding: 41px 0 44px; }
.crumbs {
  display: flex;
  flex-direction: column;
  align-items: flex-end;
  justify-self: start;
  width: 197px;
  color: #a5a3b6;
  font-size: 15px;
  font-weight: 700;
  line-height: 24px;
}
.current { display: flex; align-items: center; gap: 18px; color: #262626; }
.current svg { color: #ff5a00; }

.info { padding-top: 3px; }
.city { color: #a5a3b6; font-size: 16px; font-weight: 700; line-height: 20px; }
.info h2 { margin-top: 7px; font-size: 36px; font-weight: 700; line-height: 44px; }
.contacts {
  display: grid;
  grid-template-columns: 322px 1fr;
  gap: 24px 0;
  align-items: center;
  margin-top: 47px;
}
.big { display: block; margin-bottom: 6px; font-size: 29px; line-height: 32px; }
.accent, .tel { color: #ff5a00; }
.note { color: #a5a3b6; font-size: 15px; line-height: 20px; }
.rounds { display: flex; gap: 4px; }
.rounds a {
  display: grid;
  place-items: center;
  width: 54px;
  height: 54px;
  border: 1px solid #dcdce0;
  border-radius: 50%;
}
.vk { color: #45668e; }
.fb { color: #3b5998; }
.ig { color: #e1306c; }
.yt { color: #f00; }
.vb { color: #8f5db7; }
.tg { color: #0088cc; }

.branches { display: grid; gap: 22px; margin-top: 52px; }
.address, .tel { display: block; font-size: 18px; line-height: 27px; }
.address { margin-top: 3px; }

.request {
  display: grid;
  grid-template-columns: 322fr 323fr 412fr 215fr;
  height: 72px;
  background: #fff;
}
.field { display: flex; align-items: center; padding: 0 45px; border-right: 1px solid #efeff3; color: #c9c9cc; }
.field input { flex: 1; min-width: 0; font-size: 14px; color: #333; }
.field input::placeholder { color: #cbcbce; opacity: 1; }
.agree { display: flex; align-items: center; gap: 18px; padding-left: 44px; font-size: 13px; line-height: 14px; }
.agree input { appearance: none; width: 27px; height: 27px; border: 1px solid #e9e9f4; background: #fff; }
.send { background: #ff5a00; color: #fff; font-size: 15px; }

/* map */
.map { width: 100%; height: auto; }
.map path { stroke-linejoin: round; }
.land { fill: #fdfaf2; }
.zone { fill: #eeecf0; }
.park { fill: #d4e7bd; }
.meadow { fill: #e0eed0; }
.ring { fill: none; stroke: #e5e8cf; stroke-width: 24; }
.grey { fill: #dddee0; filter: drop-shadow(0 9px 0 #cdcecf); }
.beige { fill: #f3efe4; }
.low { filter: drop-shadow(0 7px 0 #e6e1d4); }
.tall { filter: drop-shadow(0 14px 0 #e1dcd0) drop-shadow(0 14px 0 #e1dcd0); }
.lane, .thin, .street, .street-fill, .rail, .rail-gap, .road, .road-edge, .avenue, .tram, .ticks, .arrows, .water, .names path { fill: none; }
.lane { stroke: #fff; stroke-width: 9; stroke-linecap: round; filter: drop-shadow(0 2px 1px #c9cacb); }
.thin { stroke: #cfd1d1; stroke-width: 3; }
.water { stroke: #bcdcea; stroke-width: 4; }
.street { stroke: #fff; stroke-width: 19; filter: drop-shadow(0 2px 1px #cbcccc); }
.wide { stroke: #dededd; stroke-width: 34; filter: none; }
.street-fill { stroke: #fff; stroke-width: 28; }
.rail { stroke: #b4b8ba; stroke-width: 9; }
.rail-gap { stroke: #f1f1f0; stroke-width: 7; stroke-dasharray: 18 22; }
.road-edge { stroke: #f1e2ab; stroke-width: 37; }
.road { stroke: #fcefbb; stroke-width: 32; }
.avenue { stroke: #f8dba6; stroke-width: 46; }
.tram { stroke: #d0797d; stroke-width: 4; }
.ticks { stroke: #cb6a6e; stroke-width: 13; stroke-dasharray: 4 54; }
.arrows { stroke: #a5a08e; stroke-width: 5; }
.name {
  fill: #4a4c50;
  stroke: #fff;
  stroke-width: 7;
  paint-order: stroke;
  font: 500 45px "Noto Sans", "Open Sans", sans-serif;
}
.mid { font-size: 52px; }
.large { font-size: 63px; }
.place {
  stroke: #fff;
  stroke-width: 6;
  paint-order: stroke;
  text-anchor: middle;
  font: 600 42px "Open Sans", "Noto Sans", sans-serif;
}
.violet { fill: #8f7ff0; }
.rose { fill: #e08182; }
.amber { fill: #d6884b; }
.stops, .spot { filter: drop-shadow(0 4px 3px #00000033); }
```
